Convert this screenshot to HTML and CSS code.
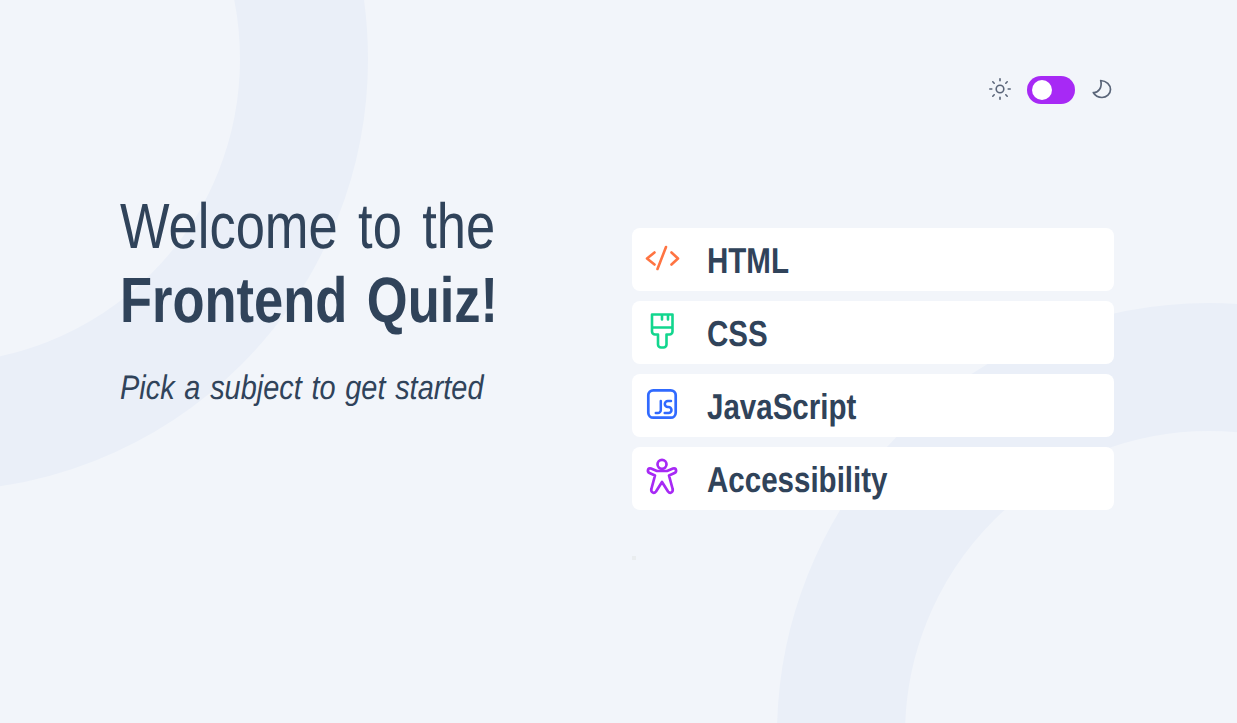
FILE: index.html
```html
<html>

<head>
  <meta name="viewport" content="width=device-width, initial-scale=1.0">
  <link rel="stylesheet" href="styles.css">
</head>

<body>
  <div class="backdrop">
    <div class="ring ring-top"></div>
    <div class="ring ring-bottom"></div>
  </div>
  <div class="page">
    <div class="theme">
      <svg width="24" height="24" viewBox="0 0 24 24" fill="none" stroke="#5A6579" stroke-width="1.600" stroke-linecap="round">
        <circle cx="12" cy="12" r="3.800"/>
        <path d="M12 1.800v2M12 20.200v2M1.800 12h2M20.200 12h2M4.800 4.800l1.400 1.400M17.800 17.800l1.400 1.400M4.800 19.200l1.400-1.400M17.800 6.200l1.400-1.400"/>
      </svg>
      <div class="toggle"><span class="knob"></span></div>
      <svg width="24" height="24" viewBox="0 0 24 24" fill="none" stroke="#5A6579" stroke-width="1.700" stroke-linejoin="round">
        <path d="M10.700 3.500C16.500 3.800 20.500 8 20.500 12.500C20.500 17 16.500 20.500 12 20.500C8.500 20.500 5 18.500 3.300 15.500C8.500 16 12.500 10.500 10.700 3.500z"/>
      </svg>
    </div>
    <div class="columns">
      <div class="intro">
        <h1><span class="line squeeze">Welcome to the</span><strong class="line squeeze">Frontend Quiz!</strong></h1>
        <p class="sub squeeze">Pick a subject to get started</p>
      </div>
      <div class="subjects">
        <div class="subject">
          <svg width="40" height="40" viewBox="0 0 40 40" fill="none" stroke="#FF7442" stroke-width="2.600" stroke-linecap="round" stroke-linejoin="round">
            <path d="M12.500 13.500L5 19.500L12.500 25.500M29.500 13.500L36 19.500L29.500 25.500M24 8L15.500 30"/>
          </svg>
          <span class="squeeze">HTML</span>
        </div>
        <div class="subject">
          <svg width="40" height="40" viewBox="0 0 40 40" fill="none" stroke="#12D68E" stroke-width="2.600" stroke-linecap="round" stroke-linejoin="round">
            <path d="M10 2.500h20.500v17a3 3 0 0 1-3 3h-3v10a3 3 0 0 1-3 3h-2.500a3 3 0 0 1-3-3v-10h-3a3 3 0 0 1-3-3zM10 15.500h20.500M20 2.500v5M26 2.500v5"/>
          </svg>
          <span class="squeeze">CSS</span>
        </div>
        <div class="subject">
          <svg width="40" height="40" viewBox="0 0 40 40" fill="none" stroke="#306AFF" stroke-width="2.700" stroke-linecap="round" stroke-linejoin="round">
            <rect x="6.300" y="5.300" width="27.400" height="27.400" rx="5"/>
            <path stroke-width="2.500" d="M18.800 16v9a3 3 0 0 1-3 3h-2M29 16h-3.200a3 3 0 0 0 0 6h.7a3 3 0 0 1 0 6h-3.800"/>
          </svg>
          <span class="squeeze">JavaScript</span>
        </div>
        <div class="subject">
          <svg width="40" height="40" viewBox="0 0 40 40" fill="none" stroke="#A729F5" stroke-width="2.700" stroke-linecap="round" stroke-linejoin="round">
            <circle cx="20" cy="6.300" r="4.500"/>
            <path d="M15 13L9 10.500C5.800 9.300 4.800 13.700 7.500 15L13 17.500L9.500 30.500C8.300 34.500 12 36 14 33.500L20 24L26 33.500C28 36 31.700 34.500 30.500 30.500L27 17.500L32.500 15C35.200 13.700 34.200 9.300 31 10.500L25 13z"/>
          </svg>
          <span class="squeeze">Accessibility</span>
        </div>
      </div>
    </div>
    <div class="dot"></div>
  </div>
</body>

</html>
```

FILE: styles.css
```css
body {
  margin: 0;
  background-color: #F2F5FA;
  color: #30435A;
  font-family: "Liberation Sans", Arial, sans-serif;
  text-rendering: geometricPrecision;
}

.backdrop {
  position: absolute;
  left: 0;
  top: 0;
  width: 1237px;
  height: 723px;
  overflow: hidden;
}
.ring {
  position: absolute;
  box-sizing: border-box;
  width: 864px;
  height: 864px;
  border: 128px solid #EAEFF8;
  border-radius: 50%;
}
.ring-top {
  left: -496px;
  top: -373px;
}
.ring-bottom {
  left: 777px;
  top: 303px;
}

.page {
  position: relative;
  padding: 76px 123px 0 120px;
}

.theme {
  display: flex;
  justify-content: flex-end;
  align-items: center;
  gap: 15px;
  height: 28px;
}
.theme svg {
  margin-bottom: 2px;
}
.toggle {
  width: 48px;
  height: 28px;
  padding: 4px 5px;
  box-sizing: border-box;
  border-radius: 14px;
  background-color: #A729F5;
}
.knob {
  display: block;
  width: 20px;
  height: 20px;
  border-radius: 50%;
  background-color: white;
}

.squeeze {
  display: block;
  transform: scaleX(0.82);
  transform-origin: left;
  white-space: nowrap;
}

.columns {
  display: flex;
  justify-content: space-between;
  margin-top: 91px;
}

.intro {
  margin-top: -6px;
}
h1 {
  margin: 0;
  font-size: 64px;
  font-weight: normal;
  line-height: 74px;
  word-spacing: 7px;
}
h1 strong {
  word-spacing: 6px;
}
.sub {
  margin: 32px 0 0;
  font-size: 34px;
  font-style: italic;
  word-spacing: 2px;
  transform: scaleX(0.85);
}

.subjects {
  display: flex;
  flex-direction: column;
  gap: 10px;
  margin-top: 33px;
  width: 482px;
}
.subject {
  display: flex;
  align-items: center;
  gap: 25px;
  height: 63px;
  padding-left: 10px;
  box-sizing: border-box;
  border-radius: 8px;
  background-color: white;
  font-size: 36px;
  font-weight: bold;
}
.subject svg {
  margin-bottom: 1px;
}
.subject span {
  padding-top: 2px;
}

.dot {
  width: 4px;
  height: 4px;
  margin: 46px 0 0 512px;
  background-color: #EAEDEF;
}
```
